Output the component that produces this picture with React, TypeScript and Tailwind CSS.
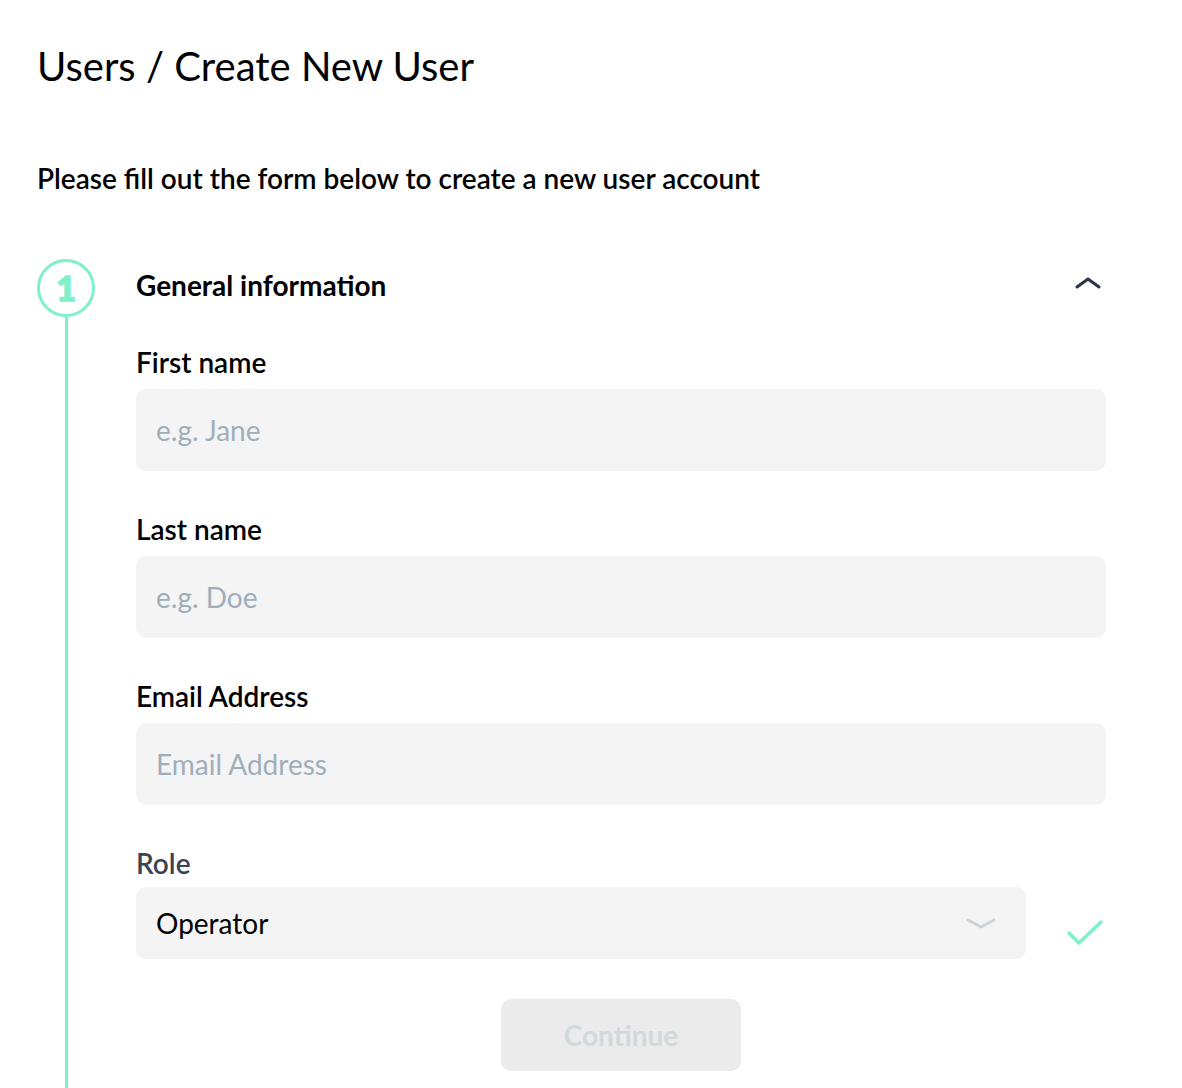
import React from "react";

const font = { fontFamily: "Lato, 'Noto Sans', sans-serif" };

function Field({ label, placeholder, first }: { label: string; placeholder: string; first?: boolean }) {
  return (
    <div className={first ? "mt-[28px]" : "mt-[41px]"}>
      <div className="text-[28px] leading-[34px] font-semibold text-black">{label}</div>
      <input
        placeholder={placeholder}
        className="mt-[10px] w-full h-[82px] rounded-[10px] bg-[#f4f4f4] px-[20px] text-[28px] text-black placeholder:text-[#9fafba] outline-none"
        style={font}
      />
    </div>
  );
}

export default function App() {
  return (
    <div className="bg-white min-h-screen text-black" style={font}>
      <div className="pl-[37px] pr-[76px] pt-[40px]">
        <h1 className="text-[40px] leading-[52px] font-normal text-black">Users / Create New User</h1>
        <p className="mt-[69px] text-[28px] leading-[34px] font-semibold">Please fill out the form below to create a new user account</p>
        <div className="mt-[64px] flex">
          <div className="w-[58px] flex flex-col items-center shrink-0">
            <div className="w-[58px] h-[58px] rounded-full border-[3px] border-[#7ef0ca] flex items-center justify-center text-[#7ef0ca] text-[34px] font-black leading-none [-webkit-text-stroke:1.5px_#7ef0ca]">
              1
            </div>
            <div className="w-[3px] flex-1 bg-[#7ef0ca]" />
          </div>
          <div className="ml-[41px] flex-1 pb-[17px]">
            <div className="h-[58px] flex items-center justify-between">
              <div className="text-[28px] font-bold leading-[34px] mb-[6px]">General information</div>
              <svg width="28" height="16" viewBox="0 0 28 16" className="mr-[4px] -mt-[10px]">
                <path d="M3 12 L14 4 L25 12" fill="none" stroke="#2d3446" strokeWidth="3" strokeLinecap="round" strokeLinejoin="round" />
              </svg>
            </div>
            <Field label="First name" placeholder="e.g. Jane" first />
            <Field label="Last name" placeholder="e.g. Doe" />
            <Field label="Email Address" placeholder="Email Address" />
            <div className="mt-[41px]">
              <div className="text-[28px] leading-[34px] font-semibold text-[#3b4252]">Role</div>
              <div className="mt-[7px] flex items-center">
                <div className="w-[890px] h-[72px] rounded-[10px] bg-[#f4f4f4] flex items-center justify-between px-[20px]">
                  <span className="text-[28px] text-black">Operator</span>
                  <svg width="32" height="14" viewBox="0 0 32 14" className="mr-[9px] mt-[2px]">
                    <path d="M3 3 L16 10 L29 3" fill="none" stroke="#cdd3d7" strokeWidth="3" strokeLinecap="round" strokeLinejoin="round" />
                  </svg>
                </div>
                <div className="flex-1 flex justify-end pr-[1px] mt-[20px]">
                  <svg width="40" height="32" viewBox="0 0 40 32">
                    <path d="M4 16 L14 26 L36 5" fill="none" stroke="#7ef0ca" strokeWidth="3.5" strokeLinecap="round" strokeLinejoin="round" />
                  </svg>
                </div>
              </div>
            </div>
            <div className="mt-[40px] flex">
              <button className="ml-[365px] w-[240px] h-[72px] rounded-[10px] bg-[#ebebeb] text-[#d1d9dc] text-[28px] font-bold" style={font}>
                Continue
              </button>
            </div>
          </div>
        </div>
      </div>
    </div>
  );
}
